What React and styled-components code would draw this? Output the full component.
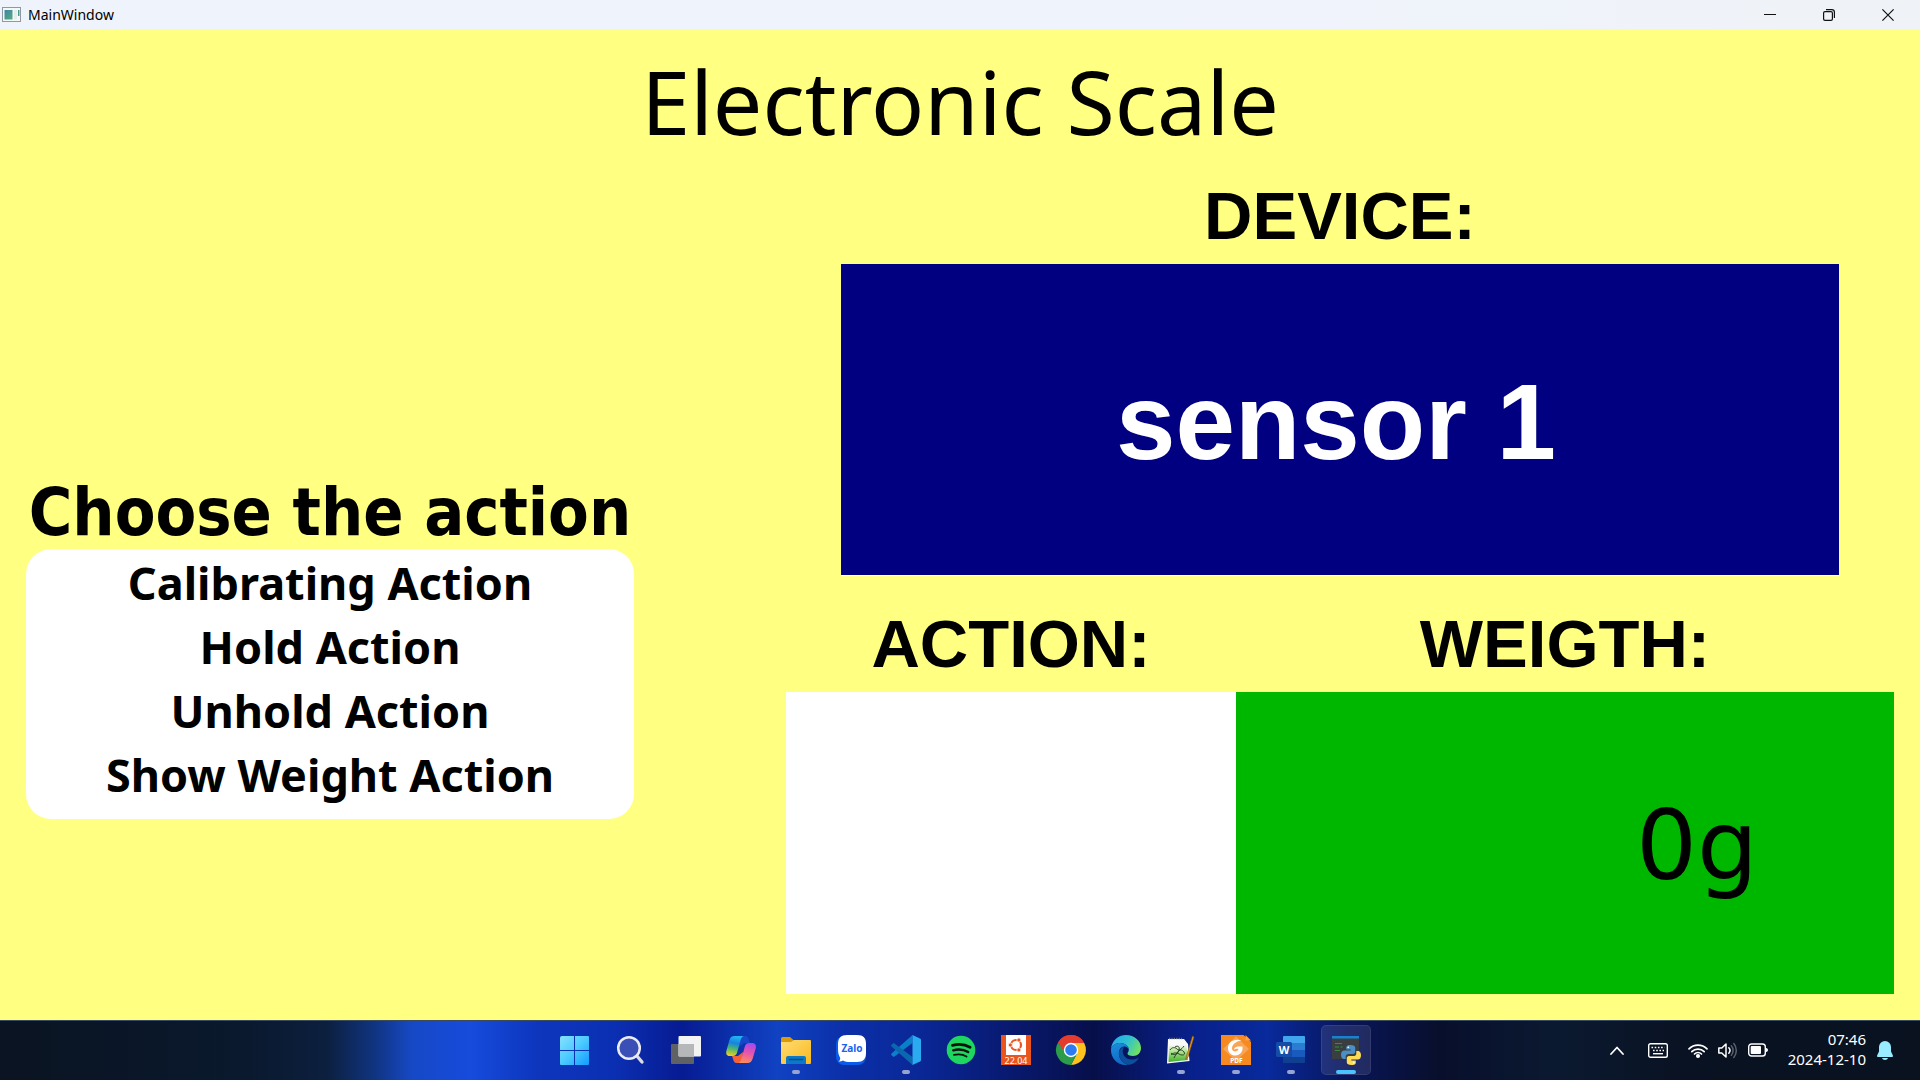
import React from "react";
import styled, { createGlobalStyle } from "styled-components";

const GlobalStyle = createGlobalStyle`
  *, *::before, *::after { box-sizing: border-box; }
  body { margin: 0; background: #ffff82; font-family: "Segoe UI", "Noto Sans", sans-serif; color: #000; }
  button { font: inherit; color: inherit; border: 0; background: none; padding: 0; cursor: pointer; }
  svg { display: block; overflow: visible; }
`;

const Screen = styled.div`
  display: flex;
  flex-direction: column;
  min-height: 100vh;
`;

/* ---------- title bar ---------- */

const TitleBar = styled.header`
  display: flex;
  align-items: center;
  height: 29px;
  padding: 0 3px 0 2px;
  background: linear-gradient(90deg, #eff3fb, #f0f3fb 70%, #eff3f8);
`;

const WindowName = styled.span`
  flex: 1;
  padding-left: 7px;
  font-size: 14px;
  line-height: 28px;
`;

const WindowButton = styled.button`
  display: grid;
  place-items: center;
  width: 59px;
  height: 28px;
`;

/* ---------- scale window ---------- */

const Window = styled.main`
  flex: 1;
  display: flex;
  flex-direction: column;
  padding: 12px 26px 26px;
`;

const Title = styled.h1`
  margin: 0 0 7px;
  font: 400 88px/120px "Comic Sans MS", "Noto Sans", sans-serif;
  text-align: center;
`;

const Columns = styled.div`
  flex: 1;
  display: grid;
  grid-template-columns: 608fr 1108fr;
  column-gap: 152px;
`;

const ActionsColumn = styled.section`
  display: flex;
  flex-direction: column;
  justify-content: flex-end;
  padding-bottom: 175px;
`;

const ActionsHeading = styled.h2`
  margin: 0;
  font: condensed 700 66px/72px "DejaVu Sans Condensed", "DejaVu Sans", sans-serif;
  text-align: center;
  white-space: nowrap;
`;

const ActionList = styled.ul`
  margin: 0;
  padding: 2px 0 12px;
  list-style: none;
  background: #fff;
  border-radius: 25px;
`;

const ActionButton = styled.button`
  display: block;
  width: 100%;
  font-size: 45px;
  font-weight: 700;
  line-height: 64px;
  text-align: center;
`;

const Readings = styled.div`
  display: flex;
  flex-direction: column;
  gap: 20px;
`;

const Reading = styled.section`
  display: flex;
  flex-direction: column;
  min-width: 0;
`;

const DeviceReading = styled(Reading)`
  flex: 408 1 0;
  padding: 0 5%;
`;

const ReadingRow = styled.div`
  flex: 398 1 0;
  display: grid;
  grid-template-columns: 450fr 658fr;
`;

const ReadingLabel = styled.h2`
  margin: 0;
  font: 700 67px/96px "Liberation Sans", Arial, sans-serif;
  text-align: center;
`;

const Display = styled.output`
  flex: 1;
  display: flex;
  align-items: center;
  justify-content: ${(p) => (p.$align === "end" ? "flex-end" : "center")};
  padding: ${(p) => (p.$align === "end" ? "6px 136px 0 0" : "4px 8px 0 0")};
  border-bottom: ${(p) => (p.$underlined ? "1px solid #fff" : "0")};
  background: ${(p) => p.$bg};
  color: ${(p) => p.$color || "#000"};
`;

const DeviceName = styled.span`
  font: 700 107px/120px "Arial Rounded MT Bold", "Liberation Sans", Arial, sans-serif;
`;

const Weight = styled.span`
  font: 400 96px/112px "DejaVu Sans", sans-serif;
`;

/* ---------- taskbar ---------- */

const Taskbar = styled.footer`
  display: grid;
  grid-template-columns: 1fr auto 1fr;
  align-items: center;
  height: 60px;
  padding-left: 2px;
  box-shadow: inset 0 1px 0 #3b4a63;
  color: #fff;
  background: linear-gradient(90deg,
    #0a1422 0%, #0a192e 13%, #0c1f3e 17%, #103480 19.500%, #1649c6 21.500%, #164bdc 24.500%,
    #0d36bd 28%, #0b2fb2 32%, #071b92 35.500%, #1042c2 40.500%, #0b2fa8 44%,
    #0a2796 48%, #08186c 53%, #070f4a 57%, #08208a 62%, #082a9c 66%,
    #08165c 70%, #080f2c 75%, #0b1930 81%, #091222 88%, #0a1220 100%);
`;

const Apps = styled.nav`
  grid-column: 2;
  display: flex;
  gap: 5px;
`;

const AppButton = styled.button`
  display: flex;
  flex-direction: column;
  align-items: center;
  justify-content: space-between;
  width: 50px;
  height: 50px;
  padding: 10px 0 1px;
  border-radius: 5px;
  background: ${(p) => (p.$active ? "rgba(255,255,255,0.1)" : "transparent")};
  box-shadow: ${(p) => (p.$active ? "inset 0 0 0 1px rgba(255,255,255,0.08)" : "none")};

  &::after {
    content: "";
    width: ${(p) => (p.$active ? "20px" : "8px")};
    height: 4px;
    border-radius: 2px;
    background: ${(p) => (p.$active ? "#4cc2ff" : p.$running ? "#97a3d3" : "transparent")};
  }
`;

const Tray = styled.div`
  display: flex;
  align-items: center;
  justify-content: flex-end;
  padding-right: 27px;
`;

const TrayButton = styled.button`
  display: grid;
  place-items: center;
  height: 40px;
  padding: 0 12px;
`;

const QuickSettings = styled.button`
  display: flex;
  align-items: center;
  gap: 10px;
  height: 40px;
  padding: 0 20px 0 8px;
`;

const Clock = styled.time`
  margin: 0 11px 2px 0;
  font-size: 15px;
  line-height: 20px;
  text-align: right;
`;

const Line = styled.span`
  display: block;
`;

/* ---------- drawings ---------- */

const Icon = ({ children }) => (
  <svg width="30" height="30" viewBox="0 0 30 30" aria-hidden="true">{children}</svg>
);

const ProgramIcon = () => (
  <svg width="19" height="15" viewBox="0 0 19 15" aria-hidden="true">
    <defs>
      <linearGradient id="prog" x1="0" y1="0" x2="1" y2="1">
        <stop offset="0" stopColor="#3d84a8" /><stop offset="1" stopColor="#55ad7c" />
      </linearGradient>
    </defs>
    <rect x=".5" y=".5" width="18" height="14" fill="#f6f8f8" stroke="#9298a0" />
    <rect x="2.500" y="3" width="8" height="9.500" fill="url(#prog)" />
    <rect x="12" y="3" width="3" height="9.500" fill="#e4eeee" />
    <rect x="16" y="3" width="1.500" height="6" fill="#4a9c8d" />
  </svg>
);

const WindowsIcon = () => (
  <Icon>
    <defs>
      <linearGradient id="win" x1="0" y1="0" x2="1" y2="1">
        <stop offset="0" stopColor="#86e2ff" /><stop offset=".5" stopColor="#4ccaff" /><stop offset="1" stopColor="#129cff" />
      </linearGradient>
    </defs>
    <path fill="url(#win)" d="M1 1h13v14H-1V3a2 2 0 0 1 2-2zM14 1h13a1 1 0 0 1 1 1v13H14zM-1 16h15v14H0a1 1 0 0 1-1-1zM14 16h14v13a1 1 0 0 1-1 1H14z" />
    <path d="M13.500 1v29M-1 15.500h29" stroke="#0b34b4" />
  </Icon>
);

const SearchIcon = () => (
  <Icon>
    <path d="M20.500 20.500 26 27" stroke="#d9dbe6" strokeWidth="3.400" strokeLinecap="round" />
    <circle cx="13" cy="13" r="10.800" fill="#3b50b6" stroke="#ebebf2" strokeWidth="2.500" />
  </Icon>
);

const TaskViewIcon = () => (
  <Icon>
    <rect x="0" y="9" width="23" height="20" rx="1" fill="#5f6164" />
    <rect x="7.500" y="1" width="22.500" height="20.500" rx="1" fill="#f3f3f3" />
    <path d="M7.500 9H23v12.500H8.500a1 1 0 0 1-1-1z" fill="#b6b7b8" />
  </Icon>
);

const CopilotIcon = () => (
  <Icon>
    <defs>
      <linearGradient id="cpA" x1=".5" y1="0" x2=".3" y2="1">
        <stop offset="0" stopColor="#23b5f0" /><stop offset=".35" stopColor="#1683e0" /><stop offset=".65" stopColor="#4fb86d" /><stop offset="1" stopColor="#f0cf1b" />
      </linearGradient>
      <linearGradient id="cpB" x1=".6" y1="0" x2=".4" y2="1">
        <stop offset="0" stopColor="#a24bea" /><stop offset=".45" stopColor="#e452b4" /><stop offset="1" stopColor="#ff8a5b" />
      </linearGradient>
    </defs>
    <path d="M14 1h5.500c2 0 2.700 1.500 3.300 3.500L24 8h-6l-5 4z" fill="#1846c9" />
    <path d="M16 28h-5.500c-2 0-2.700-1.500-3.300-3.500L6 21h6l5-4z" fill="#f4603a" />
    <path d="M8.500 1h9.500c-2 .5-2.800 2-3.400 4l-3.300 12c-.7 2.600-2 4-4.600 4H3.500C.5 21-.3 18.500.5 15.500L3.400 5.200C4.200 2.400 5.800 1 8.500 1z" fill="url(#cpA)" />
    <path d="M21.500 28H12c2-.5 2.800-2 3.400-4l3.300-12c.7-2.600 2-4 4.600-4H26c3.500 0 4.500 2.500 3.700 5.500l-3.100 10.300c-.8 2.800-2.400 4.200-5.100 4.200z" fill="url(#cpB)" />
  </Icon>
);

const FolderIcon = () => (
  <Icon>
    <defs>
      <linearGradient id="fold" x1="0" y1="0" x2="1" y2="1">
        <stop offset="0" stopColor="#ffdc75" /><stop offset="1" stopColor="#f9b91c" />
      </linearGradient>
    </defs>
    <path d="M0 3.500A1.500 1.500 0 0 1 1.500 2H9l4 3.500V9H0z" fill="#dc9a08" />
    <path d="M0 7h10l3-2h16a1 1 0 0 1 1 1v22a1 1 0 0 1-1 1H1a1 1 0 0 1-1-1z" fill="url(#fold)" />
    <path d="M5 29v-6a2 2 0 0 1 2-2h16a2 2 0 0 1 2 2v6z" fill="#0b79c8" />
    <path d="M8.500 24.500h13" stroke="#084b83" strokeWidth="1.500" strokeLinecap="round" />
  </Icon>
);

const ZaloIcon = () => (
  <Icon>
    <path d="M8 1h14a8 8 0 0 1 8 8v13a8 8 0 0 1-8 8H8a8 8 0 0 1-8-8V9a8 8 0 0 1 8-8z" fill="#0a5be8" />
    <path d="M11 0h10c6.500 0 9 3 9 9v9c0 6-3 9-9 9h-7c-3 0-5-.5-7-1.500-1.500 1-3 1.200-4.500 1C4 25.500 4.500 24 4 22.500 2.500 20 2 17 2 14V9c0-6 3-9 9-9z" fill="#fff" />
    <text x="16" y="17" textAnchor="middle" fontFamily="Noto Sans, sans-serif" fontSize="10" fontWeight="700" fill="#1464f0">Zalo</text>
  </Icon>
);

const CodeIcon = () => (
  <Icon>
    <path d="M21.500 8 3.500 21.600c-.5.400-1 .4-1.500 0l-1.500-1.400c-.5-.5-.5-1.200 0-1.700L21.500 0z" fill="#0b7fc8" />
    <path d="M21.500 22 3.500 8.400C3 8 2.500 8 2 8.400L.5 9.800c-.5.500-.5 1.200 0 1.700L21.500 30z" fill="#0a68ae" />
    <path d="M21.500 0 29 3.400c.6.300 1 .8 1 1.500v20.200c0 .7-.4 1.200-1 1.500L21.500 30z" fill="#2aaaf0" />
  </Icon>
);

const SpotifyIcon = () => (
  <Icon>
    <circle cx="15" cy="15" r="14.300" fill="#1ed760" />
    <g fill="none" stroke="#06130a" strokeLinecap="round">
      <path d="M6.500 10.300c6-1.600 12.500-1 17.600 2" strokeWidth="2.800" />
      <path d="M7.200 15.300c5-1.400 10.700-.8 15 1.800" strokeWidth="2.300" />
      <path d="M7.900 19.900c4.500-1 9-.6 12.600 1.600" strokeWidth="1.900" />
    </g>
  </Icon>
);

const UbuntuIcon = () => (
  <Icon>
    <rect width="30" height="30" fill="#e9541f" />
    <rect x="5" width="20" height="20" fill="#fff" />
    <circle cx="15" cy="10" r="5" fill="none" stroke="#e9541f" strokeWidth="2.200" />
    <g fill="#e9541f" stroke="#fff" strokeWidth=".8">
      <circle cx="9.300" cy="10" r="2.100" /><circle cx="17.900" cy="5" r="2.100" /><circle cx="17.900" cy="15" r="2.100" />
    </g>
    <text x="15" y="28.500" textAnchor="middle" fontFamily="Noto Sans, sans-serif" fontSize="9" fill="#fff">22.04</text>
  </Icon>
);

const ChromeIcon = () => (
  <Icon>
    <path d="M15 15 2 7.500A15 15 0 0 1 28 7.500z" fill="#e33b2e" />
    <path d="M15 15v15A15 15 0 0 1 2 7.500z" fill="#2a9c4a" />
    <path d="M15 8h13.200A15 15 0 0 1 15 30l6-11.500z" fill="#fcc31e" />
    <path d="M9 18.500 2 7.500 8 9l1 3zM9 18.500 15 30l6-11.500z" fill="#2a9c4a" />
    <path d="M2 7.500A15 15 0 0 1 28.200 8H15l-6.100 3.500L7 15z" fill="#e33b2e" />
    <circle cx="15" cy="15" r="7.200" fill="#fff" />
    <circle cx="15" cy="15" r="5.800" fill="#2d7bf0" />
  </Icon>
);

const EdgeIcon = () => (
  <Icon>
    <defs>
      <linearGradient id="edA" x1="0" y1=".2" x2="1" y2=".6">
        <stop offset="0" stopColor="#27a7ea" /><stop offset=".5" stopColor="#2ec0d2" /><stop offset="1" stopColor="#72e060" />
      </linearGradient>
      <linearGradient id="edB" x1="0" y1="0" x2=".3" y2="1">
        <stop offset="0" stopColor="#1a90dc" /><stop offset="1" stopColor="#1268c4" />
      </linearGradient>
    </defs>
    <path d="M0 14C.6 6 7 0 15 0c8.500 0 15 6 15 13 0 5-3.500 8-8 8-3.500 0-5.500-1.200-5.500-2.400 0-1 1.300-1.400 1.300-4C17.800 11 14 8 9 8 4.500 8 1 10.500 0 14z" fill="url(#edA)" />
    <path d="M0 14c1-3.500 4.500-6 9-6 5 0 8.800 3 8.800 6.600C17 12.500 15 11.500 13 11.600 9.500 12 7.500 15.500 8 19.500c.5 5 4 9 9 10.300C7 31.200-.5 23.500 0 14z" fill="url(#edB)" />
    <path d="M13 12c-1.800 2.500-1.800 6 .3 9 3 4 9 4.800 14.700 1.500-2.300 4.500-6.500 7.300-11 7.300-5-1.300-8.500-5.300-9-10.300C7.600 16 9.500 12.500 13 12z" fill="#0c4f9c" />
  </Icon>
);

const NotepadIcon = () => (
  <Icon>
    <defs>
      <linearGradient id="npp" x1="0" y1="0" x2="0" y2="1">
        <stop offset="0" stopColor="#f6faf2" /><stop offset=".35" stopColor="#b5e596" /><stop offset="1" stopColor="#3fae2a" />
      </linearGradient>
    </defs>
    <path d="M2 4h16l4 5 1.500 17L1 28.500z" fill="#fafafa" />
    <path d="M3 10h17.500l1.500 15L2.500 27z" fill="url(#npp)" />
    <path d="M3 3.500h13" stroke="#73777a" strokeWidth="1.600" strokeDasharray="1.200 1.200" />
    <path d="M4 15c2-3 5-3 7-1s4 1 7-3M5 18c3 3 6 1 7-1s4-3 6 0-2 4-5 2-6-1-8 1M9 12c3-2 5 0 4 3s-4 5-5 8" fill="none" stroke="#20331e" strokeWidth=".9" />
    <path d="m26.500 1-6 20-.7 3.500 2.200-2.500L28 2z" fill="#e8a01d" stroke="#7d4a10" strokeWidth=".6" />
  </Icon>
);

const FoxitIcon = () => (
  <Icon>
    <path d="M0 0h22.500L30 7v23H0z" fill="#f68a20" />
    <path d="M24.500 0 30 5.500h-5.500z" fill="#f9a24a" />
    <path d="M15 1.500 28 14 15 26 2 14z" fill="#f9a557" />
    <path d="M20.500 5.500C13 3 6.500 7 7 14c.4 5 6 8.500 11 5.500 3-1.800 4-5 3.500-8h-5c-2 .4-3 1.400-3.500 3 1.500-1 3.500-1 4.500-.5-1 3.500-6.500 3-6.500-.5 0-4 3.500-7 9.500-8z" fill="#fff" />
    <text x="15.500" y="27.500" textAnchor="middle" fontFamily="Noto Sans, sans-serif" fontSize="6.500" fontWeight="700" fill="#fff">PDF</text>
  </Icon>
);

const WordIcon = () => (
  <Icon>
    <path d="M8 1h20a1 1 0 0 1 1 1v6H7V2a1 1 0 0 1 1-1z" fill="#41a5ee" />
    <path d="M7 8h22v7H7z" fill="#2b7cd3" />
    <path d="M7 15h22v7H7z" fill="#185abd" />
    <path d="M7 22h22v5a1 1 0 0 1-1 1H8a1 1 0 0 1-1-1z" fill="#103f91" />
    <rect x="0" y="7" width="16" height="15" rx="1.500" fill="#154da6" />
    <text x="8" y="18.500" textAnchor="middle" fontFamily="Noto Sans, sans-serif" fontSize="11" fontWeight="700" fill="#fff">W</text>
  </Icon>
);

const PythonIcon = () => (
  <Icon>
    <rect x="1" y="1" width="27" height="23" fill="#3b3e41" />
    <rect x="1" y="1" width="27" height="2.500" fill="#1782d0" />
    <path d="M4 8.500h7M4 12h4M9.500 12h2M4 15.500h5" stroke="#2f8f3c" strokeWidth="1.200" />
    <path d="M19.500 10c-4 0-4.300 1.700-4.300 2.600v2h4.500v.8h-6.500c-2 0-3.200 1.600-3.200 4.300s1.200 4.300 3 4.300h1.700v-2.400c0-1.800 1.300-2.700 2.800-2.700h4.500c1.400 0 2.200-1 2.200-2.200v-4c0-1.700-1.700-2.700-4.700-2.700z" fill="#4a90c4" />
    <path d="M20.500 30c4 0 4.300-1.700 4.300-2.600v-2h-4.500v-.8h6.500c2 0 3.200-1.600 3.200-4.300S28.800 16 27 16h-1.700v2.400c0 1.800-1.300 2.700-2.800 2.700H18c-1.400 0-2.200 1-2.200 2.200v4c0 1.700 1.700 2.700 4.700 2.700z" fill="#ffdc55" />
    <circle cx="17.300" cy="12.300" r=".9" fill="#fff" />
    <circle cx="22.700" cy="27.600" r=".9" fill="#fff" />
  </Icon>
);

const KeyboardIcon = () => (
  <svg width="20" height="15" viewBox="0 0 20 15" fill="none" stroke="#fff" aria-hidden="true">
    <rect x=".7" y=".7" width="18.600" height="13.600" rx="1.800" strokeWidth="1.400" />
    <path d="M3.500 4.500h13M5 7.500h11" strokeWidth="1.600" strokeDasharray="1.600 1.600" />
    <path d="M5 10.700h10" strokeWidth="1.400" />
  </svg>
);

const WifiIcon = () => (
  <svg width="20" height="15" viewBox="0 0 20 15" fill="none" stroke="#fff" strokeWidth="1.700" strokeLinecap="round" aria-hidden="true">
    <path d="M1 5.800a12.700 12.700 0 0 1 18 0M3.800 8.600a8.800 8.800 0 0 1 12.400 0M6.500 11a5 5 0 0 1 7 0" />
    <circle cx="10" cy="13" r="1.200" fill="#fff" />
  </svg>
);

const SpeakerIcon = () => (
  <svg width="20" height="17" viewBox="0 0 20 17" fill="none" stroke="#fff" strokeWidth="1.500" strokeLinecap="round" strokeLinejoin="round" aria-hidden="true">
    <path d="M.8 6h3L8 2v13l-4.200-4h-3z" />
    <path d="M10.800 5.800a4 4 0 0 1 0 5.400" />
    <path d="M13.300 3.800a7 7 0 0 1 0 9.400M15.800 1.500a11 11 0 0 1 0 14" stroke="#59616d" />
  </svg>
);

const BatteryIcon = () => (
  <svg width="20" height="14" viewBox="0 0 20 14" aria-hidden="true">
    <rect x=".7" y="1" width="16.600" height="12" rx="2.800" fill="none" stroke="#fff" strokeWidth="1.400" />
    <rect x="2.700" y="3" width="10.300" height="8" rx="1" fill="#fff" />
    <path d="M18 5c1 0 2 .8 2 2s-1 2-2 2z" fill="#fff" />
  </svg>
);

const BellIcon = () => (
  <svg width="16" height="19" viewBox="0 0 16 19" fill="#99ebff" aria-hidden="true">
    <path d="M8 0a6 6 0 0 1 6 6v4.500l1.800 3.700c.4.900 0 1.800-1 1.800H1.200c-1 0-1.400-.9-1-1.800L2 10.500V6a6 6 0 0 1 6-6z" />
    <path d="M5 17h6c-.4 1.200-1.500 2-3 2s-2.600-.8-3-2z" />
  </svg>
);

const apps = [
  { name: "Start", icon: WindowsIcon },
  { name: "Search", icon: SearchIcon },
  { name: "Task view", icon: TaskViewIcon },
  { name: "Copilot", icon: CopilotIcon },
  { name: "File Explorer", icon: FolderIcon, running: true },
  { name: "Zalo", icon: ZaloIcon },
  { name: "Visual Studio Code", icon: CodeIcon, running: true },
  { name: "Spotify", icon: SpotifyIcon },
  { name: "Ubuntu 22.04", icon: UbuntuIcon },
  { name: "Chrome", icon: ChromeIcon },
  { name: "Edge", icon: EdgeIcon },
  { name: "Notepad++", icon: NotepadIcon, running: true },
  { name: "PDF Reader", icon: FoxitIcon, running: true },
  { name: "Word", icon: WordIcon, running: true },
  { name: "Python", icon: PythonIcon, running: true, active: true },
];

const actions = ["Calibrating Action", "Hold Action", "Unhold Action", "Show Weight Action"];

export default function App() {
  return (
    <Screen>
      <GlobalStyle />
      <TitleBar>
        <ProgramIcon />
        <WindowName>MainWindow</WindowName>
        <WindowButton aria-label="Minimize">
          <svg width="12" height="12" viewBox="0 0 12 12" aria-hidden="true"><path d="M0 5.500h12" stroke="#111" /></svg>
        </WindowButton>
        <WindowButton aria-label="Restore">
          <svg width="12" height="12" viewBox="0 0 12 12" fill="none" stroke="#111" strokeWidth="1.200" aria-hidden="true">
            <rect x=".6" y="2.600" width="8.800" height="8.800" rx="1.400" />
            <path d="M3 .6h5.800a2.600 2.600 0 0 1 2.600 2.600V9" />
          </svg>
        </WindowButton>
        <WindowButton aria-label="Close">
          <svg width="12" height="12" viewBox="0 0 12 12" stroke="#111" strokeWidth="1.200" aria-hidden="true"><path d="m.4.400 11.200 11.200M11.600.4.400 11.600" /></svg>
        </WindowButton>
      </TitleBar>

      <Window>
        <Title>Electronic Scale</Title>
        <Columns>
          <ActionsColumn>
            <ActionsHeading>Choose the action</ActionsHeading>
            <ActionList>
              {actions.map((a) => (
                <li key={a}><ActionButton>{a}</ActionButton></li>
              ))}
            </ActionList>
          </ActionsColumn>
          <Readings>
            <DeviceReading>
              <ReadingLabel>DEVICE:</ReadingLabel>
              <Display $bg="#000080" $color="#fff" $underlined><DeviceName>sensor 1</DeviceName></Display>
            </DeviceReading>
            <ReadingRow>
              <Reading>
                <ReadingLabel>ACTION:</ReadingLabel>
                <Display $bg="#fff" />
              </Reading>
              <Reading>
                <ReadingLabel>WEIGTH:</ReadingLabel>
                <Display $bg="#00b700" $align="end"><Weight>0g</Weight></Display>
              </Reading>
            </ReadingRow>
          </Readings>
        </Columns>
      </Window>

      <Taskbar>
        <Apps>
          {apps.map(({ name, icon: Glyph, running, active }) => (
            <AppButton key={name} aria-label={name} $running={running} $active={active}><Glyph /></AppButton>
          ))}
        </Apps>
        <Tray>
          <TrayButton aria-label="Show hidden icons">
            <svg width="14" height="9" viewBox="0 0 14 9" fill="none" stroke="#fff" strokeWidth="1.800" strokeLinecap="round" strokeLinejoin="round" aria-hidden="true"><path d="m1 8 6-6.500L13 8" /></svg>
          </TrayButton>
          <TrayButton aria-label="Touch keyboard"><KeyboardIcon /></TrayButton>
          <QuickSettings aria-label="Network, volume, battery">
            <WifiIcon /><SpeakerIcon /><BatteryIcon />
          </QuickSettings>
          <Clock>
            <Line>07:46</Line>
            <Line>2024-12-10</Line>
          </Clock>
          <BellIcon />
        </Tray>
      </Taskbar>
    </Screen>
  );
}
